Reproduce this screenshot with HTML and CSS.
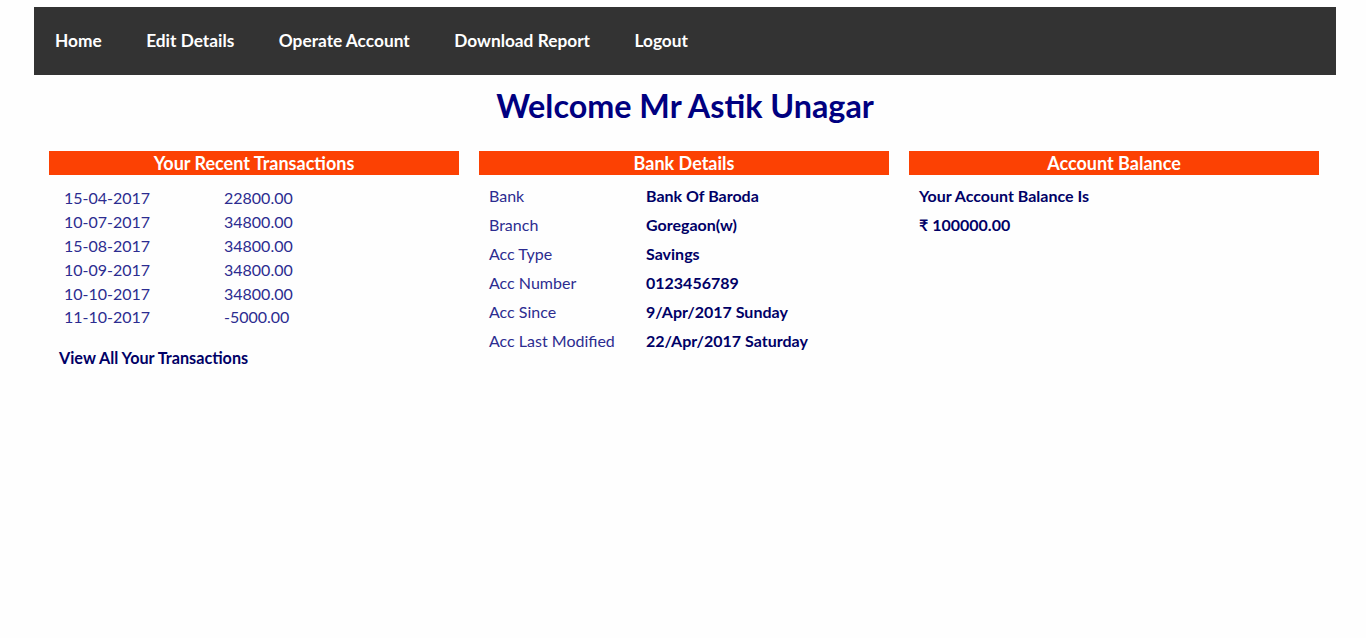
FILE: index.html
```html
<!DOCTYPE html>
<html>
<head>
<meta charset="utf-8">
<link rel="stylesheet" href="styles.css">
</head>
<body>
<div class="page">
  <nav class="nav">
    <a href="#">Home</a>
    <a href="#">Edit Details</a>
    <a href="#">Operate Account</a>
    <a href="#">Download Report</a>
    <a href="#">Logout</a>
  </nav>
  <h1 class="title">Welcome Mr Astik Unagar</h1>
  <div class="cols">
    <section class="col">
      <h2 class="head">Your Recent Transactions</h2>
      <table class="tx">
        <tr><td>15-04-2017</td><td>22800.00</td></tr>
        <tr><td>10-07-2017</td><td>34800.00</td></tr>
        <tr><td>15-08-2017</td><td>34800.00</td></tr>
        <tr><td>10-09-2017</td><td>34800.00</td></tr>
        <tr><td>10-10-2017</td><td>34800.00</td></tr>
        <tr><td>11-10-2017</td><td>-5000.00</td></tr>
      </table>
      <a class="viewall" href="#">View All Your Transactions</a>
    </section>
    <section class="col">
      <h2 class="head">Bank Details</h2>
      <table class="bd">
        <tr><td>Bank</td><td>Bank Of Baroda</td></tr>
        <tr><td>Branch</td><td>Goregaon(w)</td></tr>
        <tr><td>Acc Type</td><td>Savings</td></tr>
        <tr><td>Acc Number</td><td>0123456789</td></tr>
        <tr><td>Acc Since</td><td>9/Apr/2017 Sunday</td></tr>
        <tr><td>Acc Last Modified</td><td>22/Apr/2017 Saturday</td></tr>
      </table>
    </section>
    <section class="col">
      <h2 class="head">Account Balance</h2>
      <div class="bal">
        <p>Your Account Balance Is</p>
        <p>₹ 100000.00</p>
      </div>
    </section>
  </div>
</div>
</body>
</html>
```

FILE: styles.css
```css
html, body {
  margin: 0;
  padding: 0;
  background: #fefefe;
  font-family: Lato, "Liberation Sans", sans-serif;
}
.page {
  margin-left: 34px;
  width: 1302px;
  padding-top: 7px;
}
.nav {
  background: #333333;
  height: 68px;
  display: flex;
  align-items: center;
  padding-left: 21px;
  padding-bottom: 2px;
  box-sizing: border-box;
  gap: 44.5px;
}
.nav a {
  color: #ffffff;
  text-decoration: none;
  font-weight: bold;
  font-size: 17.3px;
}
.title {
  margin: 12px 0 0;
  text-align: center;
  color: #000080;
  font-size: 32.3px;
  font-weight: bold;
  line-height: 38px;
}
.cols {
  display: flex;
  gap: 20px;
  padding-left: 15px;
  margin-top: 26px;
}
.col {
  width: 410px;
}
.head {
  margin: 0;
  background: #fc4103;
  color: #ffffff;
  font-size: 18px;
  font-weight: bold;
  text-align: center;
  height: 24px;
  line-height: 24px;
}
.tx {
  border-collapse: collapse;
  margin: 11px 0 0 15px;
  font-size: 16px;
  color: #2c2c90;
}
.tx td {
  padding: 0;
  height: 23.8px;
}
.tx td:first-child {
  width: 160px;
}
.viewall {
  display: block;
  margin: 19px 0 0 10px;
  color: #000066;
  font-weight: bold;
  font-size: 16.2px;
  text-decoration: none;
}
.bd {
  border-collapse: collapse;
  margin: 6px 0 0 10px;
  font-size: 16px;
}
.bd td {
  padding: 0;
  height: 29px;
}
.bd td:first-child {
  width: 157px;
  color: #2c2c90;
}
.bd td:last-child {
  color: #000066;
  font-weight: bold;
}
.bal {
  padding: 6px 10px 0;
  color: #000066;
  font-weight: bold;
  font-size: 16px;
}
.bal p {
  margin: 0;
  height: 29px;
  line-height: 29px;
}
```
